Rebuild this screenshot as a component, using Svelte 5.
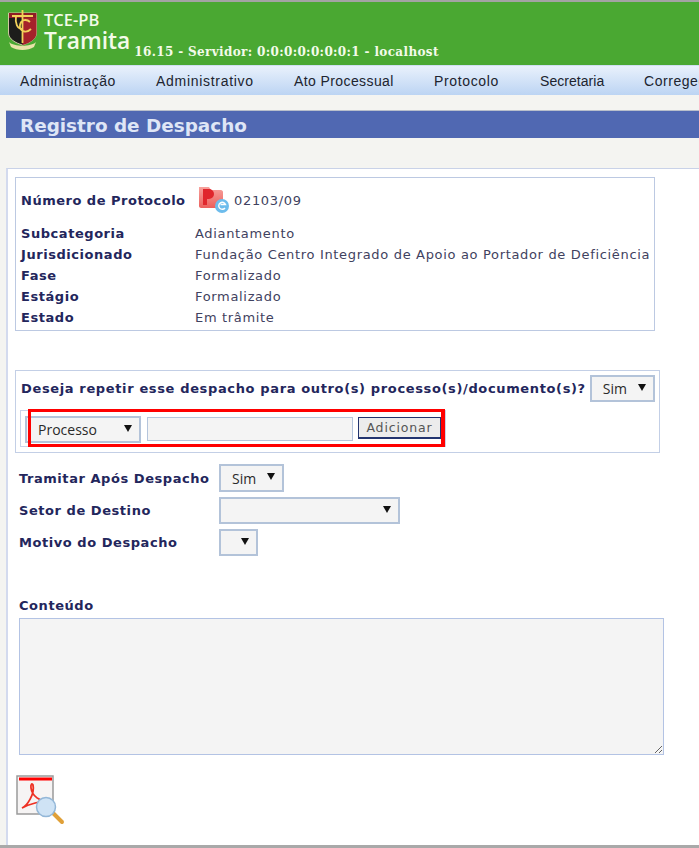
<script>
  const menu = ['Administração', 'Administrativo', 'Ato Processual', 'Protocolo', 'Secretaria', 'Corregedoria'];
  const info = [
    ['Subcategoria', 'Adiantamento'],
    ['Jurisdicionado', 'Fundação Centro Integrado de Apoio ao Portador de Deficiência'],
    ['Fase', 'Formalizado'],
    ['Estágio', 'Formalizado'],
    ['Estado', 'Em trâmite']
  ];
</script>

<div class="page">
  <header class="top">
    <svg class="crest" width="29" height="42" viewBox="0 0 29 42">
      <path d="M.5 3h28v20c0 6-7 10-14 12C7.500 33 .5 29 .5 23z" fill="#1d1d1b" stroke="#cfc9a0" stroke-width="1"/>
      <path d="M14.500 3h14v20c0 6-7 10-14 12z" fill="#a5222a"/>
      <path d="M1 3h27v5H1z" fill="#8f1d25"/>
      <path d="M4 6h21M14.500 0v33M8 6c-1 7 1 13 6.500 13M22 12c-3-3-9-3-10 3s6 9 11 4" fill="none" stroke="#f2d25a" stroke-width="1.800"/>
      <path d="M1 32c5 5 22 5 27 0l-2 5c-6 4-17 4-23 0z" fill="#e9e3a8"/>
    </svg>
    <div class="brand"><span class="org">TCE-PB</span><span class="app">Tramita</span></div>
    <div class="server">16.15 - Servidor: 0:0:0:0:0:0:0:1 - localhost</div>
  </header>

  <nav class="menu">
    {#each menu as item}<span>{item}</span>{/each}
  </nav>

  <div class="band"><h1>Registro de Despacho</h1></div>

  <main>
    <section class="info">
      <div class="proto">
        <b>Número de Protocolo</b>
        <span class="protoval">
          <svg width="32" height="29" viewBox="0 0 32 29">
            <defs><linearGradient id="fold" x1="0" y1="0" x2="0" y2="1"><stop offset="0" stop-color="#f7a29d"/><stop offset="1" stop-color="#ec5f5c"/></linearGradient></defs>
            <path d="M1 2h10l2 3h10c1 0 2 1 2 2v14c0 1-1 2-2 2H3c-1 0-2-1-2-2z" fill="url(#fold)"/>
            <path d="M5 20V4h6a5 5 0 0 1 0 10H9v6z" fill="#e0262c"/>
            <circle cx="24" cy="21" r="7" fill="#6dbcec"/>
            <path d="M27 23a3.500 3.500 0 1 1 .5-3.500h-5" fill="none" stroke="#fff" stroke-width="1.400"/>
          </svg>
          <span>02103/09</span>
        </span>
      </div>
      {#each info as [k, v]}
        <div class="row"><b>{k}</b><span>{v}</span></div>
      {/each}
    </section>

    <section class="repeat">
      <div class="ask">
        <b>Deseja repetir esse despacho para outro(s) processo(s)/documento(s)?</b>
        <div class="sel s-sim"><select><option>Sim</option></select></div>
      </div>
      <div class="add">
        <div class="sel s-proc"><select><option>Processo</option></select></div>
        <input class="num" type="text" />
        <button type="button">Adicionar</button>
        <div class="mark"></div>
      </div>
    </section>

    <div class="fields">
      <div class="field f1"><b>Tramitar Após Despacho</b><div class="sel s-sim2"><select><option>Sim</option></select></div></div>
      <div class="field f2"><b>Setor de Destino</b><div class="sel s-setor"><select><option></option></select></div></div>
      <div class="field f3"><b>Motivo do Despacho</b><div class="sel s-mot"><select><option></option></select></div></div>
    </div>

    <b class="clabel">Conteúdo</b>
    <textarea></textarea>

    <div class="pdf">
      <svg width="52" height="52" viewBox="0 0 52 52">
        <rect x="1" y="1" width="36" height="38" fill="#f6f4f4" stroke="#9a9a9a" stroke-width="1.500"/>
        <rect x="3" y="2.500" width="33" height="3" fill="#f00"/>
        <path d="M6 33c5-2 13-14 11-23-1-2-2.500-1-2 3 1 8 9 14 18 13-8 0-20 3-27 7z" fill="none" stroke="#ee3124" stroke-width="1.800"/>
        <line x1="37" y1="38" x2="46" y2="47" stroke="#e0a038" stroke-width="4" stroke-linecap="round"/>
        <circle cx="30" cy="32" r="9.500" fill="#cfe3f5" stroke="#93b7d8" stroke-width="1.500"/>
      </svg>
    </div>
  </main>
</div>

<style>
  :global(body) { margin: 0; background: #fff; }
  .page {
    width: 699px; height: 848px; overflow: hidden; display: flex; flex-direction: column;
    background: #f4f4f1; font-family: "DejaVu Sans", Verdana, sans-serif; font-size: 13px; color: #23265c;
    border-bottom: 3px solid #a9a9a9; box-sizing: border-box;
  }
  .top {
    height: 65px; box-sizing: border-box; flex: none; background: #4aa832; border-top: 2px solid #a3a3a3;
    display: flex; padding: 8px 0 0 8px; color: #f3fbe9;
  }
  .crest { flex: none; }
  .brand { display: flex; flex-direction: column; margin-left: 7px; font-family: "Open Sans", sans-serif; font-weight: 600; }
  .org { font-size: 16.5px; line-height: 18px; margin-top: 1px; }
  .app { font-size: 22.8px; line-height: 24px; font-weight: 600; }
  .server { font-family: "DejaVu Serif", serif; font-weight: 700; font-size: 12px; margin: 35px 0 0 4px; line-height: 14px; white-space: nowrap; letter-spacing: .35px; }
  .menu {
    height: 30px; flex: none; box-sizing: border-box; display: flex; gap: 40px; padding-left: 20px; align-items: center; white-space: nowrap;
    background: linear-gradient(#e9f1fc, #bcd4f3); border-top: 1px solid #cfdff2;
    font-family: "Liberation Sans", Arial, sans-serif; font-size: 14px; color: #20242f; letter-spacing: .55px;
  }
  .menu span { flex: none; }
  .menu span:nth-child(1) { width: 96px; }
  .menu span:nth-child(2) { width: 98px; letter-spacing: .7px; }
  .menu span:nth-child(3) { width: 100px; letter-spacing: .4px; }
  .menu span:nth-child(4) { width: 66px; letter-spacing: .65px; }
  .menu span:nth-child(5) { width: 64px; letter-spacing: .05px; }
  .band { height: 73px; flex: none; padding: 15px 0 0 6px; box-sizing: border-box; }
  h1 {
    margin: 0; height: 28px; box-sizing: border-box; background: #5068b2; color: #dfe6f6; border-top: 1px solid #b9bfcb;
    font-family: "DejaVu Sans", sans-serif; font-weight: 700; font-size: 18.4px; line-height: 29px; padding-left: 14px;
  }
  main {
    flex: 1; margin-left: 6px; background: #fff; border-left: 2px solid #d3daee; border-top: 1px solid #c9d2e8; padding: 8px 0 0 7px; position: relative;
  }
  b { font-weight: 700; color: #23265c; letter-spacing: .55px; }
  .info { width: 640px; height: 154px; box-sizing: border-box; border: 1px solid #bcc9e2; padding: 9px 0 0 5px; }
  .proto { display: flex; height: 27px; align-items: center; }
  .proto b { width: 174px; flex: none; letter-spacing: .5px; }
  .protoval { display: flex; align-items: center; gap: 4px; margin-left: 3px; color: #3f4260; letter-spacing: .67px; }
  .protoval svg { margin-top: -2px; }
  .row { display: flex; height: 21px; align-items: center; white-space: nowrap; }
  .proto + .row { margin-top: 9px; }
  .row b { width: 174px; flex: none; }
  .row span { color: #3f4260; letter-spacing: .67px; }
  .repeat { width: 645px; height: 83px; margin-top: 39px; box-sizing: border-box; border: 1px solid #c3cfe6; padding: 4px 0 0 5px; position: relative; }
  .ask { display: flex; align-items: center; gap: 4px; white-space: nowrap; }
  .ask b { letter-spacing: .635px; }
  .sel { position: relative; display: block; box-sizing: border-box; background: #f4f4f4; border: 2px solid #b3c3d9; flex: none; }
  .sel::after {
    content: ""; position: absolute; right: 7px; top: 50%; margin-top: -5px;
    border-left: 4px solid transparent; border-right: 4px solid transparent; border-top: 7px solid #111; pointer-events: none;
  }
  select {
    appearance: none; width: 100%; height: 100%; border: 0; background: transparent; display: block;
    font-family: "Open Sans", sans-serif; font-size: 14px; color: #2a2a2a; padding: 0 0 0 11px; margin: 0; outline: 0;
  }
  .s-sim { width: 65px; height: 27px; }
  .add { margin: 8px 0 0 -1px; height: 37px; box-sizing: border-box; border: 1px solid #c9d3e9; width: 426px; padding: 5px 0 0 4px; display: flex; gap: 5px; align-items: flex-start; position: relative; }
  .s-proc { width: 116px; height: 27px; }
  .num { width: 206px; height: 24px; box-sizing: border-box; margin: 1px 0 0 1px; padding: 0; background: #f4f4f4; border: 1px solid #b5c5dc; }
  button {
    width: 83px; height: 22px; box-sizing: border-box; margin: 1px 0 0 0; padding: 0; background: #ececec; border: 1px solid #22346f; border-width: 1px 1px 2px;
    font-family: "DejaVu Sans", sans-serif; font-size: 12.5px; color: #555; letter-spacing: .85px; line-height: 17px;
  }
  .mark { position: absolute; left: 7px; top: -2px; width: 417px; height: 38px; box-sizing: border-box; border: 3px solid #f00; border-width: 3px 4px 3px 3px; pointer-events: none; }
  .fields { margin-top: 11px; margin-left: 4px; }
  .field { display: flex; align-items: center; }
  .field b { width: 200px; flex: none; }
  .f1 { height: 28px; }
  .f2 { height: 27px; margin-top: 5px; }
  .f3 { height: 27px; margin-top: 5px; }
  .s-sim2 { width: 65px; height: 28px; }
  .s-setor { width: 181px; height: 27px; }
  .s-mot { width: 39px; height: 27px; }
  .clabel { display: block; margin: 42px 0 0 4px; line-height: 16px; }
  textarea { display: block; box-sizing: border-box; width: 645px; height: 137px; margin: 4px 0 0 4px; background: #f4f4f4; border: 1px solid #b3c3e4; padding: 0; outline: 0; }
  .pdf { margin: 20px 0 0 1px; line-height: 0; }
  .pdf svg { display: block; }
</style>
